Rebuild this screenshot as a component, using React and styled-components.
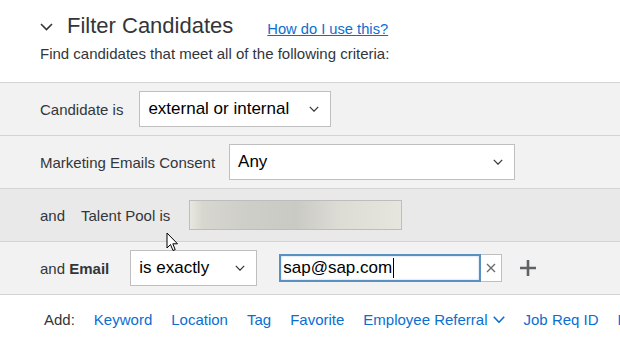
import React from "react";
import styled, { createGlobalStyle } from "styled-components";

const Global = createGlobalStyle`
  html, body { margin: 0; padding: 0; background: #ffffff; }
  body { font-family: "Liberation Sans", Arial, sans-serif; color: #32363a; }
  * { box-sizing: border-box; }
`;

const Page = styled.div`
  position: relative;
  width: 620px;
  height: 353px;
  overflow: hidden;
  background: #fff;
`;

const Header = styled.div`
  padding: 12px 0 0 40px;
  height: 82px;
`;

const TitleRow = styled.div`
  display: flex;
  align-items: center;
  height: 28px;
`;

const Collapse = styled.svg`
  width: 13px;
  height: 8px;
  margin-right: 14px;
  margin-top: 2px;
`;

const Title = styled.h1`
  margin: 0;
  font-size: 22px;
  font-weight: 400;
  color: #32363a;
  line-height: 28px;
`;

const HelpLink = styled.a`
  margin-left: 34px;
  margin-top: 5px;
  font-size: 14.7px;
  color: #0a6ed1;
  text-decoration: underline;
`;

const Subtitle = styled.p`
  margin: 4px 0 0;
  font-size: 15px;
  line-height: 20px;
`;

const Rows = styled.div`
  border-top: 1px solid #d4d4d4;
`;

const Row = styled.div`
  display: flex;
  align-items: center;
  height: 53px;
  padding-left: 40px;
  gap: ${(p) => p.$gap || 18}px;
  background: ${(p) => (p.$hover ? "#e9e9e9" : "#f2f2f2")};
  border-bottom: 1px solid #d4d4d4;
`;

const Label = styled.span`
  font-size: 15px;
  color: #32363a;
  white-space: nowrap;
  b { font-weight: 700; }
`;

const Select = styled.div`
  display: flex;
  align-items: center;
  justify-content: space-between;
  width: ${(p) => p.$w}px;
  height: 36px;
  padding: 0 11px 0 8px;
  background: #fff;
  border: 1px solid #bfbfbf;
  font-size: 17px;
  color: #000;
`;

const SmallChevron = styled.svg`
  width: 10px;
  height: 6px;
`;

const BlurBox = styled.div`
  width: 213px;
  height: 30px;
  margin-left: 3px;
  border: 1px solid #bdbdbd;
  background: linear-gradient(
    90deg,
    #e8e8e0 0%,
    #d7d7d0 6%,
    #cfcfc9 25%,
    #cacac4 50%,
    #dcdcd5 70%,
    #e6e6df 100%
  );
`;

const InputGroup = styled.div`
  display: flex;
  align-items: stretch;
  width: 223px;
  height: 28px;
  border: 1px solid #bfbfbf;
  background: #fff;
  margin-left: 1px;
`;

const TextInput = styled.div`
  flex: 1;
  display: flex;
  align-items: center;
  margin: -1px 0 -1px -1px;
  padding-left: 2px;
  border: 2px solid #5a8fc2;
  box-shadow: inset 0 0 2px #9fc3e6;
  font-size: 17px;
  color: #000;
`;

const Caret = styled.span`
  display: inline-block;
  width: 1px;
  height: 20px;
  background: #000;
  margin-left: 1px;
`;

const ClearBtn = styled.div`
  width: 20px;
  display: flex;
  align-items: center;
  justify-content: center;
`;

const PlusBtn = styled.svg`
  width: 16px;
  height: 16px;
  margin-left: -3px;
`;

const Footer = styled.div`
  display: flex;
  align-items: center;
  gap: 19px;
  padding: 16px 0 0 44px;
  font-size: 15px;
  white-space: nowrap;
`;

const AddLabel = styled.span`
  color: #32363a;
`;

const FooterLink = styled.a`
  display: inline-flex;
  align-items: center;
  gap: 5px;
  color: #0a6ed1;
  text-decoration: none;
`;

const Cursor = styled.svg`
  position: absolute;
  left: 166px;
  top: 232px;
  width: 13px;
  height: 20px;
`;

const Chev = ({ w = 10, h = 6, color = "#32363a", sw = 1.2 }) => (
  <SmallChevron viewBox={`0 0 ${w} ${h}`} style={{ width: w, height: h }}>
    <polyline
      points={`0.8,0.8 ${w / 2},${h - 0.8} ${w - 0.8},0.8`}
      fill="none"
      stroke={color}
      strokeWidth={sw}
    />
  </SmallChevron>
);

export default function App() {
  return (
    <Page>
      <Global />
      <Header>
        <TitleRow>
          <Collapse viewBox="0 0 13 8">
            <polyline points="1,1 6.5,6.5 12,1" fill="none" stroke="#32363a" strokeWidth="1.6" />
          </Collapse>
          <Title>Filter Candidates</Title>
          <HelpLink href="#">How do I use this?</HelpLink>
        </TitleRow>
        <Subtitle>Find candidates that meet all of the following criteria:</Subtitle>
      </Header>
      <Rows>
        <Row $gap={16}>
          <Label>Candidate is</Label>
          <Select $w={192}>
            <span>external or internal</span>
            <Chev />
          </Select>
        </Row>
        <Row $gap={14}>
          <Label>Marketing Emails Consent</Label>
          <Select $w={286}>
            <span>Any</span>
            <Chev />
          </Select>
        </Row>
        <Row $hover $gap={16}>
          <Label>and</Label>
          <Label>Talent Pool is</Label>
          <BlurBox />
        </Row>
        <Row $gap={21}>
          <Label>
            and <b>Email</b>
          </Label>
          <Select $w={127}>
            <span>is exactly</span>
            <Chev />
          </Select>
          <InputGroup>
            <TextInput>
              sap@sap.com
              <Caret />
            </TextInput>
            <ClearBtn>
              <svg width="10" height="10" viewBox="0 0 10 10">
                <path d="M1 1L9 9M9 1L1 9" stroke="#6a6d70" strokeWidth="1.4" />
              </svg>
            </ClearBtn>
          </InputGroup>
          <PlusBtn viewBox="0 0 16 16">
            <path d="M8 0V16M0 8H16" stroke="#5f6266" strokeWidth="2.6" />
          </PlusBtn>
        </Row>
      </Rows>
      <Footer>
        <AddLabel>Add:</AddLabel>
        <FooterLink href="#">Keyword</FooterLink>
        <FooterLink href="#">Location</FooterLink>
        <FooterLink href="#">Tag</FooterLink>
        <FooterLink href="#">Favorite</FooterLink>
        <FooterLink href="#">
          Employee Referral
          <Chev w={12} h={7} color="#0a6ed1" sw={1.6} />
        </FooterLink>
        <FooterLink href="#">Job Req ID</FooterLink>
        <FooterLink href="#">Requisition</FooterLink>
      </Footer>
      <Cursor viewBox="0 0 13 20">
        <path
          d="M1 1 L1 16 L4.5 12.5 L7 18.5 L9.2 17.6 L6.8 11.8 L11.5 11.8 Z"
          fill="#fff"
          stroke="#000"
          strokeWidth="1"
          strokeLinejoin="round"
        />
      </Cursor>
    </Page>
  );
}
